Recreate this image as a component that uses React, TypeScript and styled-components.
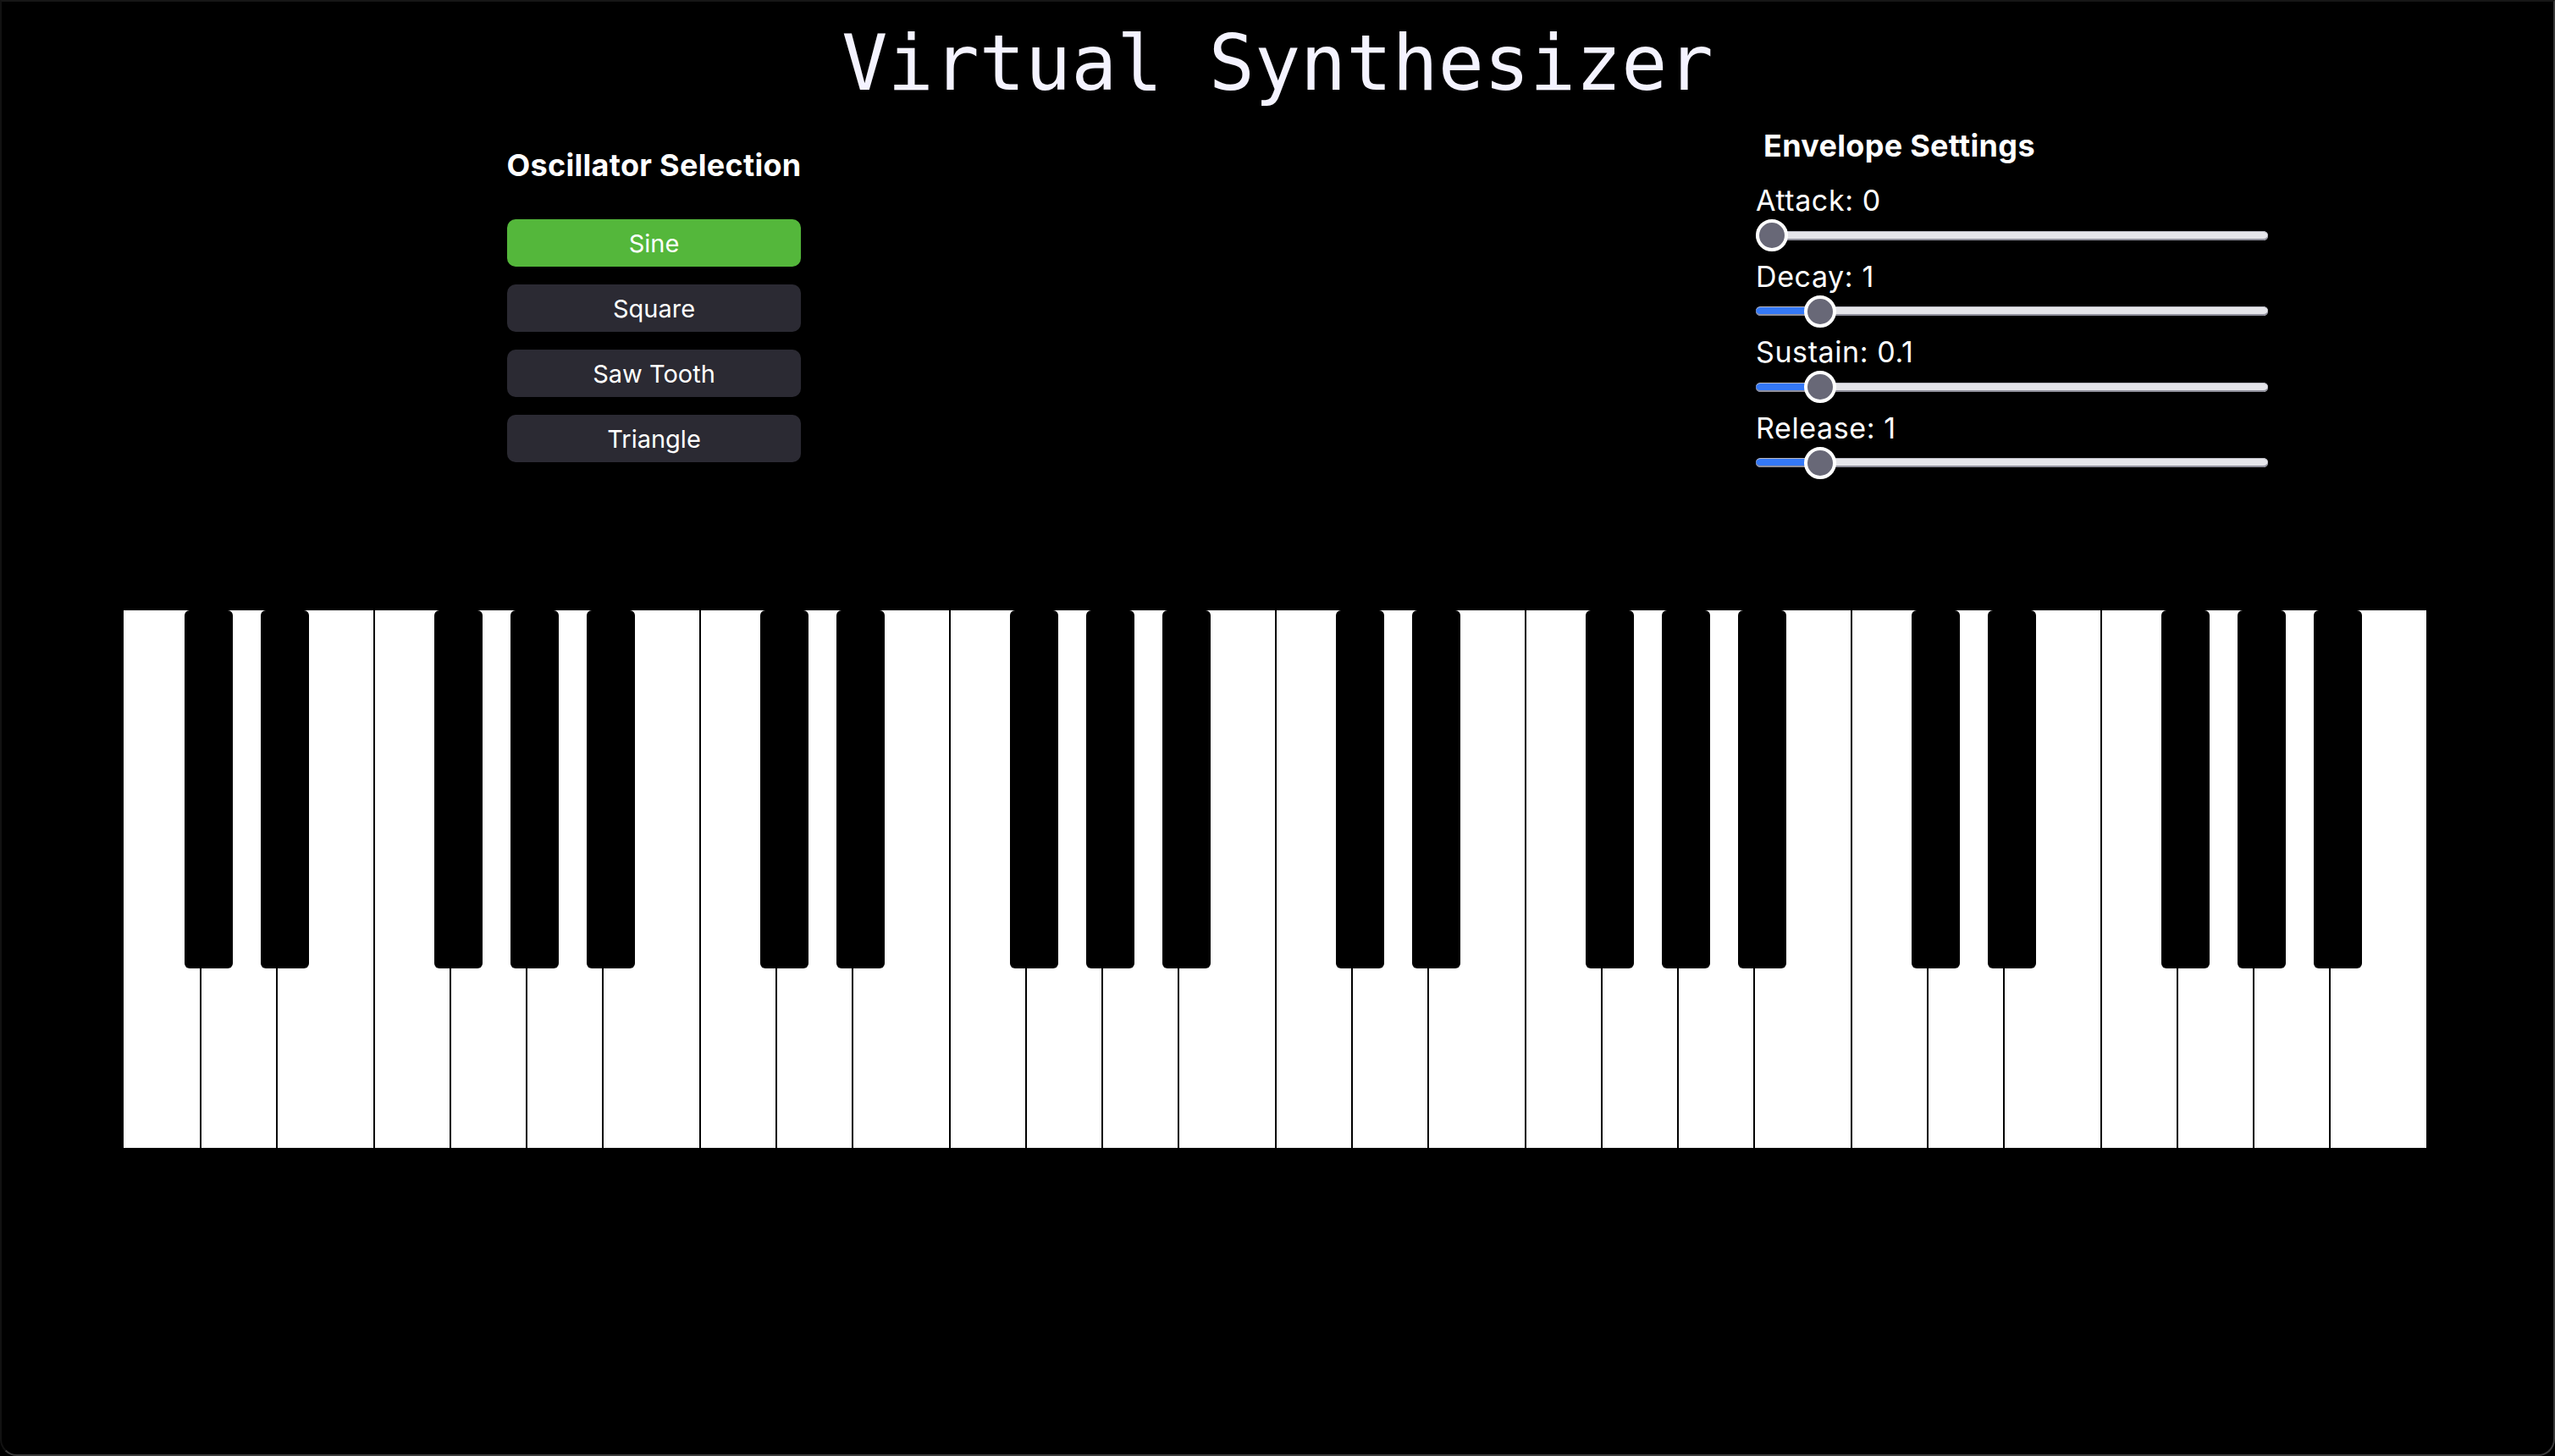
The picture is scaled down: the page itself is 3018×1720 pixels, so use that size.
import styled, { createGlobalStyle } from "styled-components";
import { useState } from "react";

const GlobalStyle = createGlobalStyle`
  html, body {
    margin: 0;
    padding: 0;
    background: #000;
  }
  * {
    box-sizing: border-box;
  }
`;

type Osc = "sine" | "square" | "sawtooth" | "triangle";

const oscillators: { id: Osc; label: string }[] = [
  { id: "sine", label: "Sine" },
  { id: "square", label: "Square" },
  { id: "sawtooth", label: "Saw Tooth" },
  { id: "triangle", label: "Triangle" },
];

interface IEnvelope {
  key: "attack" | "decay" | "sustain" | "release";
  label: string;
  max: number;
  step: number;
}

const envelopeSettings: IEnvelope[] = [
  { key: "attack", label: "Attack", max: 10, step: 0.1 },
  { key: "decay", label: "Decay", max: 10, step: 0.1 },
  { key: "sustain", label: "Sustain", max: 1, step: 0.1 },
  { key: "release", label: "Release", max: 10, step: 0.1 },
];

// one octave: white notes, and whether a black key follows
const octave = [
  { note: "C", sharp: true },
  { note: "D", sharp: true },
  { note: "E", sharp: false },
  { note: "F", sharp: true },
  { note: "G", sharp: true },
  { note: "A", sharp: true },
  { note: "B", sharp: false },
];

const SLIDER_WIDTH = 605;
const THUMB = 38;

const App = () => {
  const [osc, setOsc] = useState<Osc>("sine");
  const [envelope, setEnvelope] = useState({
    attack: 0,
    decay: 1,
    sustain: 0.1,
    release: 1,
  });

  const keys: { id: string; black: boolean }[] = [];
  [3, 4, 5, 6].forEach((o) => {
    octave.forEach((k) => {
      keys.push({ id: `${k.note}${o}`, black: false });
      if (k.sharp) keys.push({ id: `${k.note}#${o}`, black: true });
    });
  });

  return (
    <Frame>
      <GlobalStyle />
      <Title>Virtual Synthesizer</Title>
      <Controls>
        <OscPanel>
          <OscTitle>Oscillator Selection</OscTitle>
          <OscList>
            {oscillators.map((o) => (
              <OscButton
                key={o.id}
                $active={osc === o.id}
                onClick={() => setOsc(o.id)}
              >
                {o.label}
              </OscButton>
            ))}
          </OscList>
        </OscPanel>
        <EnvPanel>
          <EnvTitle>Envelope Settings</EnvTitle>
          <EnvList>
            {envelopeSettings.map((s) => {
              const value = envelope[s.key];
              const fill =
                THUMB / 2 + (value / s.max) * (SLIDER_WIDTH - THUMB);
              return (
                <EnvRow key={s.key}>
                  <EnvLabel>
                    {s.label}: {value}
                  </EnvLabel>
                  <Slider
                    type="range"
                    min={0}
                    max={s.max}
                    step={s.step}
                    value={value}
                    $fill={fill}
                    onChange={(e) =>
                      setEnvelope((prev) => ({
                        ...prev,
                        [s.key]: Number(e.target.value),
                      }))
                    }
                  />
                </EnvRow>
              );
            })}
          </EnvList>
        </EnvPanel>
      </Controls>
      <Keyboard>
        {keys.map((k) =>
          k.black ? <BlackKey key={k.id} /> : <WhiteKey key={k.id} />,
        )}
      </Keyboard>
    </Frame>
  );
};
export default App;

const Frame = styled.div`
  height: 1720px;
  background: #000;
  border-top: 2px solid #161616;
  border-right: 2px solid #3a3a3a;
  border-bottom: 2px solid #3a3a3a;
  border-left: 2px solid #121212;
  border-radius: 0 0 20px 20px;
  overflow: hidden;
  font-family: Inter, "Noto Sans", sans-serif;
  color: #fff;
`;

const Title = styled.h1`
  margin: 28px 0 0;
  height: 90px;
  font-family: "DejaVu Sans Mono", "Liberation Mono", monospace;
  font-size: 90px;
  font-weight: 400;
  line-height: 90px;
  text-align: center;
  color: #f4f3ff;
`;

const Controls = styled.div`
  display: flex;
  align-items: flex-start;
  gap: 1128px;
  padding-left: 597px;
`;

const OscPanel = styled.div`
  width: 347px;
  display: flex;
  flex-direction: column;
`;

const OscTitle = styled.h3`
  margin: 54px -10px 0;
  font-size: 36px;
  font-weight: 700;
  line-height: 1.2;
  text-align: center;
  letter-spacing: 0.3px;
  white-space: nowrap;
`;

const OscList = styled.div`
  margin-top: 42px;
  display: flex;
  flex-direction: column;
  gap: 21px;
`;

const OscButton = styled.button<{ $active: boolean }>`
  height: 56px;
  width: 100%;
  border: none;
  border-radius: 10px;
  background: ${(p) => (p.$active ? "#54b73b" : "#2b2a33")};
  color: #fff;
  font-family: Inter, "Noto Sans", sans-serif;
  font-size: 29px;
  font-weight: 400;
  cursor: pointer;
  padding: 0;
`;

const EnvPanel = styled.div`
  width: ${SLIDER_WIDTH}px;
  display: flex;
  flex-direction: column;
`;

const EnvTitle = styled.h3`
  margin: 31px 0 0;
  padding-left: 9px;
  font-size: 36px;
  font-weight: 700;
  line-height: 1.2;
  letter-spacing: 0.3px;
`;

const EnvList = styled.div`
  margin-top: 23px;
  display: flex;
  flex-direction: column;
  gap: 9.5px;
`;

const EnvRow = styled.div`
  display: flex;
  flex-direction: column;
  gap: 2px;
`;

const EnvLabel = styled.label`
  font-size: 34px;
  line-height: 40px;
  letter-spacing: 0.6px;
`;

const Slider = styled.input<{ $fill: number }>`
  -webkit-appearance: none;
  appearance: none;
  width: ${SLIDER_WIDTH}px;
  height: ${THUMB}px;
  margin: 0;
  background: transparent;
  cursor: pointer;

  &::-webkit-slider-runnable-track {
    height: 11px;
    border-radius: 6px;
    background: linear-gradient(
      to right,
      #3478f6 ${(p) => p.$fill}px,
      #e5e5ea ${(p) => p.$fill}px
    );
    box-shadow: inset 0 -2px 0 #8f8f9b, inset 0 1px 0 #b9b9c2;
  }

  &::-webkit-slider-thumb {
    -webkit-appearance: none;
    width: ${THUMB}px;
    height: ${THUMB}px;
    margin-top: -13.5px;
    border-radius: 50%;
    background: #686877;
    border: 4px solid #fff;
    box-sizing: border-box;
  }
`;

const Keyboard = styled.div`
  margin: 155px 0 0 144px;
  display: flex;
  align-items: flex-start;
`;

const WhiteKey = styled.div`
  flex: 0 0 115px;
  height: 635px;
  background: #fff;
  border-left: 2px solid #000;

  &:first-child {
    border-left: none;
  }
`;

const BlackKey = styled.div`
  position: relative;
  z-index: 1;
  flex: 0 0 57px;
  height: 423px;
  margin: 0 -39px 0 -43px;
  background: #000;
  border-radius: 6px;
`;
